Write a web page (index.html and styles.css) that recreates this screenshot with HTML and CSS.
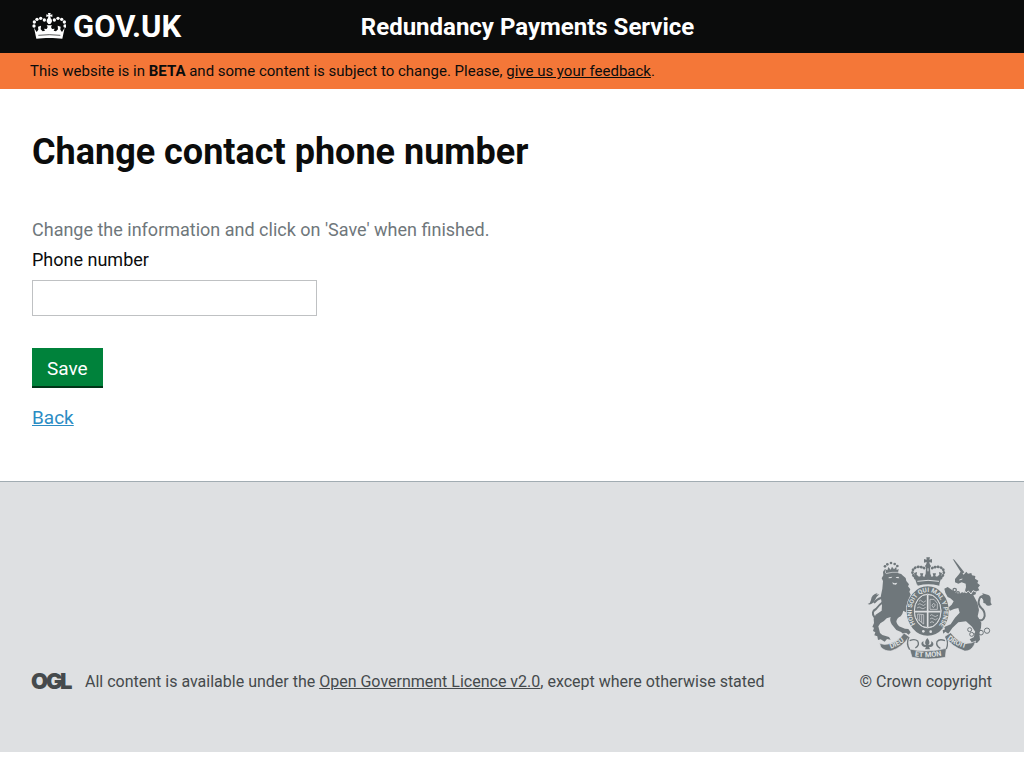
FILE: index.html
```html
<!DOCTYPE html>
<html lang="en">
<head>
<meta charset="utf-8">
<meta name="viewport" content="width=device-width, initial-scale=1">
<title>Change contact phone number - Redundancy Payments Service</title>
<link rel="stylesheet" href="styles.css">
</head>
<body>
<header class="header">
  <div class="header-inner">
    <a class="logo" href="#">
      <svg class="logo-crown" viewBox="36 24 102 78" aria-hidden="true">
        <g fill="#fff">
          <circle cx="42" cy="63" r="5"/><circle cx="43" cy="51" r="5"/><circle cx="51" cy="43" r="5"/><circle cx="62" cy="40" r="5"/><circle cx="73" cy="45" r="5"/>
          <circle cx="135" cy="63" r="5"/><circle cx="133" cy="51" r="5"/><circle cx="125" cy="43" r="5"/><circle cx="114" cy="40" r="5"/><circle cx="103" cy="45" r="5"/>
          <path d="M84 24h8l-1 6 6-2v8l-6-2 1 6c4 3 5 8 3 12l-4 5h-6l-4-5c-2-4-1-9 3-12l1-6-6 2v-8l6 2z"/>
          <path d="M42 68l8 13 5-7-1-9 9-3-1 11 6 6 7-2-3-6 8 1 3-6-3-5h16l-3 5 3 6 8-1-3 6 7 2 6-6-1-11 9 3-1 9 5 7 8-13-7 33c-22-3-56-3-78 0z"/>
        </g>
        <path d="M55 91q33-4 66 0" fill="none" stroke="#0b0c0c" stroke-width="2"/>
      </svg>
      <span>GOV.UK</span>
    </a>
    <a class="service-name" href="#">Redundancy Payments Service</a>
  </div>
</header>
<div class="beta-banner">
  <p>This website is in <strong>BETA</strong> and some content is subject to change. Please, <a href="#">give us your feedback</a>.</p>
</div>
<main class="content">
  <h1>Change contact phone number</h1>
  <form class="form">
    <p class="hint">Change the information and click on 'Save' when finished.</p>
    <label for="phone">Phone number</label>
    <input class="text-input" id="phone" name="phone" type="tel">
    <button class="button" type="submit">Save</button>
    <a class="back" href="#">Back</a>
  </form>
</main>
<footer class="footer">
  <div class="licence">
    <svg class="ogl" viewBox="0 0 41 18" role="img" aria-label="OGL">
      <text class="ogl-text" x="-1 14 28" y="17">OGL</text>
    </svg>
    <p>All content is available under the <a href="#">Open Government Licence v2.0</a>, except where otherwise stated</p>
  </div>
  <div class="copyright">
    <svg class="crest" viewBox="9 9 375 306" aria-hidden="true">
      <defs>
        <path id="garter" d="M155 212A48 59 0 1 1 227 212"/>
        <path id="motto-left" d="M80 284Q106 276 130 254"/>
        <path id="motto-mid" d="M152 307Q193 313 240 304"/>
        <path id="motto-right" d="M249 255Q274 276 309 284"/>
      </defs>
      <!-- lion -->
      <g fill="#6f777b">
        <path d="M64 58l37-7 2 7q10 1 14 7l8 7 2 9 8 10-3 6 7 9-3 7 4 9-2 7 5 8-4 10q-8 4-12 10l10 15 9 3-3 10-10 2-3-10-12-7q-2 10-8 17-12 6-13 16 2 8 8 14l18 7 10 1 7 10-6 7-8-6-8 4-7-6-14-6-14-17q-7-12-3-22l-12 4q-8 10-19 15l-6 9 5 20 7 6 20 6 5 8-11-2-7 8-12-7-8 2-2-11-9-3 3-9-7-4 3-10-5-2 5-12-1-13 6-12 18-12 1-18-4-24 5-24 2-23-4-8 5-9-1-10 5-9z"/>
        <path d="M66 57l-3-12 7 4 3-10 7 8 4-9 6 8 7-8 1 10 6-3-2 11q-18-2-36 1z"/>
        <circle cx="63" cy="37" r="4"/><circle cx="70" cy="31" r="4"/><circle cx="81" cy="27" r="4"/><circle cx="92" cy="30" r="4"/><circle cx="100" cy="36" r="4"/>
      </g>
      <path d="M60 194Q42 205 31 189T36 165Q47 151 57 144 63 134 51 132 40 134 30 147" fill="none" stroke="#6f777b" stroke-width="6"/>
      <path d="M11 150q9-3 10-12 1-16 20-21l-4 5 9-1q-10 8-13 17-9 17-22 12z" fill="#6f777b"/>
      <path d="M74 70l11-2-3 4-8 1zM95 70l8-2 3 5-9-1zM85 85l6 3 9-2-4 6-9-1z" fill="#dee0e2"/>
      <path d="M66 59q18-6 36-4" fill="none" stroke="#dee0e2" stroke-width="2"/>
      <!-- unicorn -->
      <g fill="#6f777b">
        <path d="M266 15l5 2 30 38-7 5z"/>
        <path d="M290 53l9 9 8-9 5 6 10-2 2 7 10 2-1 8 10 6-3 7 8 7-6 7 4 8-9 3-2 9-7 3 12 22 5 22-4 19 11 19-1 15-5 16 2 20-9 10-16-2-6-9 12-6 5-16-10-16-18-16-23 3-18 17-12 17-9-6-6 6-2-10 7-3-2-7 19-8 13-20 14-15-4-14-13 3-12 5-7-7 12-11 6-10-10-9-8-4-7-13-3-12 10-5 12 8 18 12 20-2 5-18-1-10-12-4-10 4-10-4v-10l12-14z"/>
      </g>
      <path d="M342 197Q358 204 362 186 363 171 352 162 340 151 346 135 351 122 358 132 363 140 360 147" fill="none" stroke="#6f777b" stroke-width="6"/>
      <path d="M347 132q8-11 11-11l-5-4 20 6q8 4 7 15-1 11 4 13-12 10-20-2-7-20-17-17z" fill="#6f777b"/>
      <path d="M286 100l6 10 8-4 6 11 7-6 8 9 6-10 9 4M286 78l9-3" fill="none" stroke="#dee0e2" stroke-width="3"/>
      <g fill="none" stroke="#6f777b" stroke-width="4"><circle cx="272" cy="108" r="5"/><circle cx="282" cy="117" r="4"/><circle cx="295" cy="121" r="4"/></g>
      <g fill="none" stroke="#6f777b" stroke-width="3">
        <circle cx="335" cy="164" r="6"/><circle cx="317" cy="227" r="6"/><circle cx="323" cy="241" r="6"/><circle cx="337" cy="240" r="5"/><circle cx="351" cy="236" r="7"/><circle cx="369" cy="230" r="8"/>
      </g>
      <!-- crown -->
      <g fill="#6f777b">
        <path d="M187 10h11l-2 7 8-2v11l-8-2 1 6 4 6-3 5 1 18 4 10 5-3-2-8h10l-2 8 5 2 7-6-1-8 9 3-2 8 5 2-6 7-6 18q-34-6-66 0l-6-18-6-7 5-2-2-8 9-3-1 8 7 6 5-2-2-8h10l-2 8 5 3 4-10 1-18-3-5 4-6 1-6-8 2V15l8 2z"/>
      </g>
      <path d="M154 72C132 48 156 30 182 43M231 72C253 48 229 30 203 43" fill="none" stroke="#6f777b" stroke-width="8" stroke-linecap="round" stroke-dasharray="1 8"/>
      <path d="M160 82q32-6 65 0M192 43v9" fill="none" stroke="#dee0e2" stroke-width="3"/>
      <!-- garter and shield -->
      <ellipse cx="191" cy="171" rx="65" ry="76" fill="#dee0e2"/>
      <path d="M161 87q32-6 65 0v8q-33-8-65 0z" fill="#6f777b"/>
      <ellipse cx="191" cy="171" rx="52" ry="63" fill="none" stroke="#6f777b" stroke-width="22"/>
      <text class="garter-text"><textPath href="#garter" startOffset="2">HONI SOIT QUI MAL Y PENSE</textPath></text>
      <ellipse cx="191" cy="171" rx="40" ry="50" fill="#6f777b" stroke="#dee0e2" stroke-width="3"/>
      <path d="M191 123v96M152 173h78" stroke="#dee0e2" stroke-width="5"/>
      <g fill="none" stroke="#dee0e2" stroke-width="2">
        <path d="M165 142q5-7 9 0t12-2M161 152q7-6 12 0t12-2M159 162q7-6 12 0t14-2"/>
        <path d="M198 136h12l10 12v18h-22zM204 155q4-12 10-2l-6 8z"/>
        <path d="M161 180v16l18 14V182zM167 182v18M173 182v23"/>
        <path d="M198 185q5-6 10 0t14-1M198 195q6-6 11 0t12-2M198 206q6-6 12 0"/>
      </g>
      <circle cx="178" cy="232" r="4" fill="#dee0e2"/><circle cx="200" cy="233" r="4" fill="#dee0e2"/>
      <!-- motto ribbon -->
      <g fill="#6f777b" stroke="#dee0e2" stroke-width="2">
        <path d="M120 237l15 11q-20 32-54 43-19 1-31-12l-3-11q12 5 26 2 31-8 47-33z"/>
        <path d="M260 236l-17 11q19 31 59 44 17 2 28-17l5-13q-13 8-27 7-30-7-48-32z"/>
        <path d="M137 285q52 13 110-2l-3 27q-51 10-100 0z"/>
      </g>
      <g fill="none" stroke="#6f777b" stroke-width="4">
        <path d="M135 249q-10 20 2 38M137 260q15-7 24 1 7 13-7 21M245 248q10 17 2 37M243 260q-17-7-24 3-4 13 10 20"/>
      </g>
      <path d="M190 252q-11 13-4 21-11 0-7-11-9 2-6 11 5 8 13 5l-3 8h15l-3-8q9 3 13-5 1-9-7-11 4 11-8 11 8-8-3-21z" fill="#6f777b"/>
      <text class="motto-text"><textPath href="#motto-left">DIEU</textPath></text>
      <text class="motto-text"><textPath href="#motto-mid">ET MON</textPath></text>
      <text class="motto-text"><textPath href="#motto-right">DROIT</textPath></text>
    </svg>
    <a href="#">© Crown copyright</a>
  </div>
</footer>
</body>
</html>
```
FILE: styles.css
```css
* { box-sizing: border-box; }
body {
  margin: 0;
  background: #fff;
  color: #0b0c0c;
  font-family: Roboto, "Liberation Sans", sans-serif;
  font-size: 18px;
  line-height: 30px;
}
p, h1 { margin: 0; }
.header { background: #0b0c0c; }
.header-inner {
  display: flex;
  align-items: center;
  gap: 12px;
  margin: 0 32px;
  padding: 9px 0 8px;
  line-height: 36px;
}
.logo {
  display: flex;
  flex: 0 0 33%;
  gap: 7px;
  color: #fff;
  font-size: 31px;
  font-weight: 700;
  text-decoration: none;
}
.logo-crown { width: 34px; height: 26px; margin-top: 4px; }
.service-name {
  color: #fff;
  font-size: 24px;
  font-weight: 700;
  text-decoration: none;
}
.beta-banner {
  padding: 8px 30px;
  background: #f47738;
  font-size: 15px;
  line-height: 20px;
}
.beta-banner a { color: inherit; }
.content { padding: 40px 32px 48px; }
h1 {
  margin-bottom: 40px;
  font-size: 36px;
  font-weight: 700;
  line-height: 46px;
}
.form {
  display: flex;
  flex-direction: column;
  align-items: flex-start;
}
.hint { color: #6f777b; }
.text-input {
  width: 285px;
  max-width: 100%;
  height: 36px;
  margin: 5px 0 32px;
  padding: 4px;
  border: 1px solid #bfc1c3;
  border-radius: 0;
  font: inherit;
}
.button {
  height: 40px;
  margin-bottom: 15px;
  padding: 3px 15px 0;
  border: 0;
  border-bottom: 2px solid #003618;
  background: #00823b;
  color: #fff;
  font: inherit;
  font-size: 19px;
}
.back { color: #2b8cc4; font-size: 19px; }
.footer {
  display: flex;
  justify-content: space-between;
  align-items: flex-end;
  gap: 24px;
  padding: 75px 32px 60px;
  border-top: 1px solid #a1acb2;
  background: #dee0e2;
  color: #454a4c;
  font-size: 16px;
  line-height: 20px;
}
.footer a { color: inherit; }
.licence { display: flex; gap: 12px; }
.ogl { flex: none; width: 41px; height: 18px; overflow: visible; }
.ogl-text { fill: #454a4c; font: 900 22px Inter, sans-serif; }
.copyright {
  display: flex;
  flex: none;
  flex-direction: column;
  align-items: flex-end;
  gap: 13px;
}
.copyright a { text-decoration: none; }
.crest { width: 125px; height: 102px; }
.garter-text { fill: #dee0e2; font: 700 19px Roboto, sans-serif; }
.motto-text { fill: #dee0e2; font: 700 22px Roboto, sans-serif; }
```
